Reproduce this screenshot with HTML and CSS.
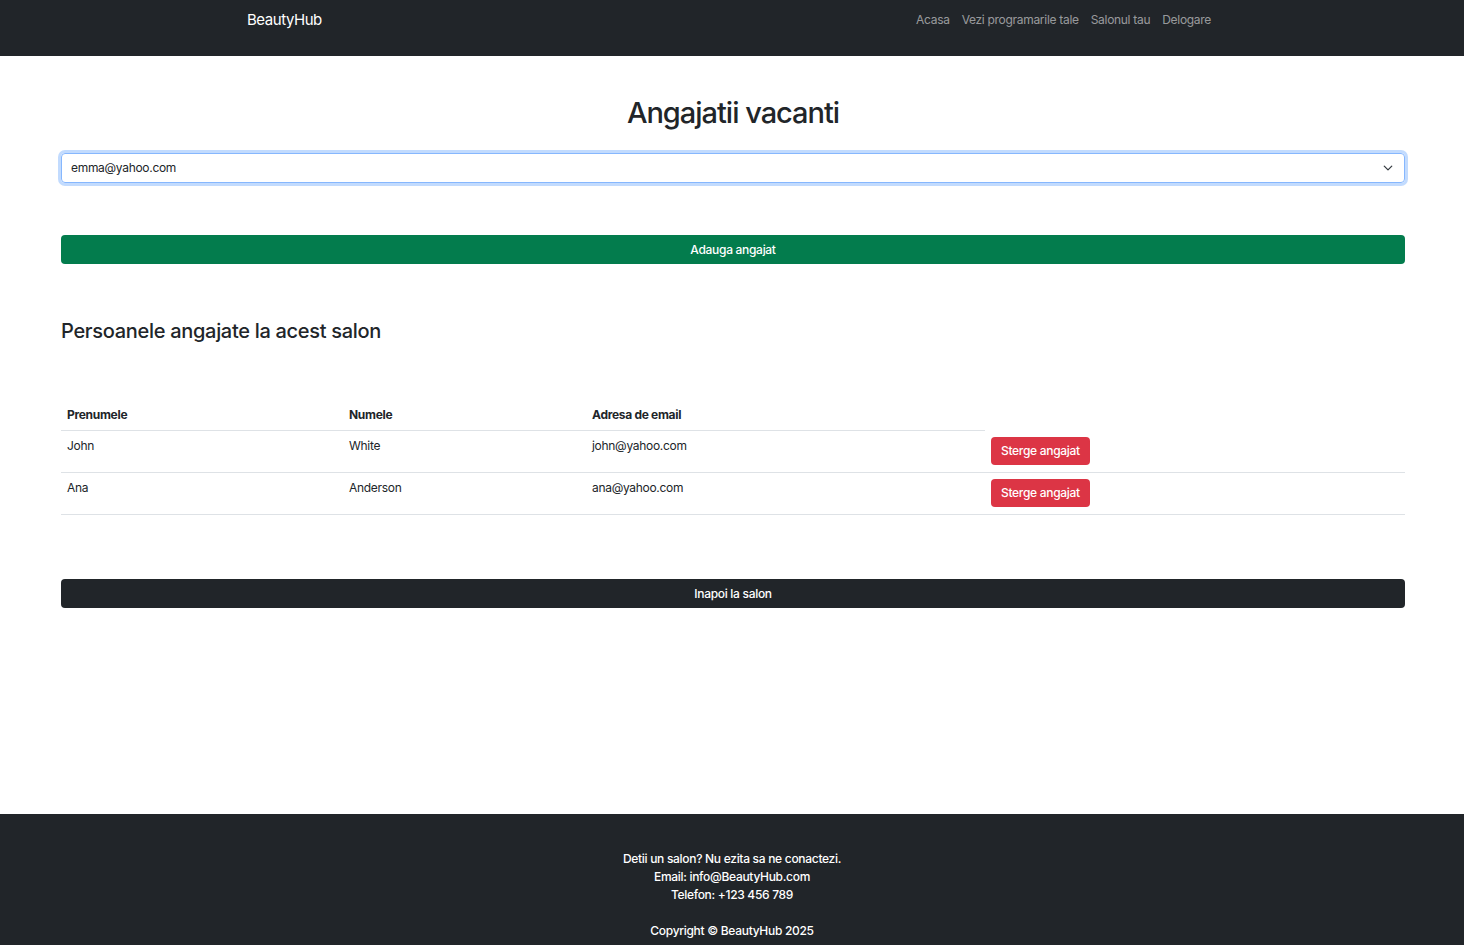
FILE: index.html
```html
<!DOCTYPE html>
<html lang="ro">
<head>
<meta charset="utf-8">
<title>BeautyHub</title>
<link rel="stylesheet" href="styles.css">
</head>
<body>
<nav class="navbar">
  <div class="nav-inner">
    <a class="brand" href="#">BeautyHub</a>
    <ul class="nav-links">
      <li><a href="#">Acasa</a></li>
      <li><a href="#">Vezi programarile tale</a></li>
      <li><a href="#">Salonul tau</a></li>
      <li><a href="#">Delogare</a></li>
    </ul>
  </div>
</nav>

<main class="main">
  <h1 class="title">Angajatii vacanti</h1>
  <div class="select">
    <span class="select-value">emma@yahoo.com</span>
    <svg class="chevron" width="10" height="10" viewBox="0 0 16 16"><path d="M2 5l6 6 6-6" fill="none" stroke="#343a40" stroke-width="2" stroke-linecap="round" stroke-linejoin="round"/></svg>
  </div>
  <button class="btn btn-success">Adauga angajat</button>

  <h2 class="subtitle">Persoanele angajate la acest salon</h2>

  <table class="table">
    <thead>
      <tr>
        <th class="c1">Prenumele</th>
        <th class="c2">Numele</th>
        <th class="c3">Adresa de email</th>
      </tr>
    </thead>
    <tbody>
      <tr>
        <td>John</td>
        <td>White</td>
        <td>john@yahoo.com</td>
        <td><button class="btn-danger">Sterge angajat</button></td>
      </tr>
      <tr>
        <td>Ana</td>
        <td>Anderson</td>
        <td>ana@yahoo.com</td>
        <td><button class="btn-danger">Sterge angajat</button></td>
      </tr>
    </tbody>
  </table>

  <button class="btn btn-dark">Inapoi la salon</button>
</main>

<footer class="footer">
  <p>Detii un salon? Nu ezita sa ne conactezi.</p>
  <p>Email: info@BeautyHub.com</p>
  <p>Telefon: +123 456 789</p>
  <p class="copy">Copyright © BeautyHub 2025</p>
</footer>
</body>
</html>
```

FILE: styles.css
```css
* { box-sizing: border-box; }
html, body { margin: 0; padding: 0; }
body {
  font-family: Inter, "Noto Sans", sans-serif;
  font-size: 12px;
  line-height: 18px;
  letter-spacing: -0.025em;
  color: #212529;
  background: #fff;
  min-height: 100vh;
  display: flex;
  flex-direction: column;
}
a { text-decoration: none; }

.navbar {
  background: #212529;
  height: 56px;
}
.nav-inner {
  width: 970px;
  margin: 0 auto;
  padding-top: 8px;
  display: flex;
  justify-content: space-between;
  align-items: center;
}
.brand {
  color: #fff;
  font-size: 15px;
  line-height: 24px;
  font-weight: 400;
  letter-spacing: -0.03em;
}
.nav-links {
  list-style: none;
  margin: 0;
  padding: 0;
  display: flex;
}
.nav-links a {
  display: block;
  padding: 0 6px;
  color: rgba(255,255,255,0.55);
  font-size: 12px;
  line-height: 22px;
}

.main {
  flex: 1;
  margin: 0 59px 0 61px;
  display: flex;
  flex-direction: column;
}
.title {
  margin: 39px 0 0;
  text-align: center;
  font-size: 29px;
  line-height: 35px;
  font-weight: 500;
  letter-spacing: -0.035em;
}
.select {
  margin-top: 23px;
  height: 30px;
  border: 1px solid #86b7fe;
  border-radius: 4px;
  box-shadow: 0 0 0 3px rgba(13,110,253,0.25);
  display: flex;
  align-items: center;
  justify-content: space-between;
  padding: 0 11px 0 9px;
}
.chevron { display: block; }

.btn {
  border: 0;
  width: 100%;
  height: 29px;
  border-radius: 4px;
  color: #fff;
  font-family: inherit;
  font-size: 12px;
  font-weight: 500;
  letter-spacing: inherit;
  cursor: pointer;
}
.btn-success { margin-top: 52px; background: #037c4d; }
.btn-dark { margin-top: 64px; background: #212529; }

.subtitle {
  margin: 55px 0 0;
  font-size: 20px;
  line-height: 24px;
  font-weight: 500;
}

.table {
  margin-top: 57px;
  width: 100%;
  border-collapse: collapse;
}
.table th, .table td {
  text-align: left;
  vertical-align: top;
  padding: 6px;
}
.table th {
  font-weight: 700;
  border-bottom: 1px solid #dee2e6;
}
.table td { border-bottom: 1px solid #dee2e6; }
.table tbody td { padding: 6px 6px 7px; }
.c1 { width: 282px; }
.c2 { width: 243px; }
.c3 { width: 399px; }
.btn-danger {
  display: block;
  height: 28px;
  padding: 0 10px;
  border: 0;
  border-radius: 4px;
  background: #dc3545;
  color: #fff;
  font-family: inherit;
  font-size: 12px;
  font-weight: 500;
  letter-spacing: inherit;
}

.footer {
  background: #212529;
  color: #fff;
  text-align: center;
  padding: 36px 0 5px;
  font-weight: 500;
}
.footer p { margin: 0; }
.footer .copy { margin-top: 18px; }
```
